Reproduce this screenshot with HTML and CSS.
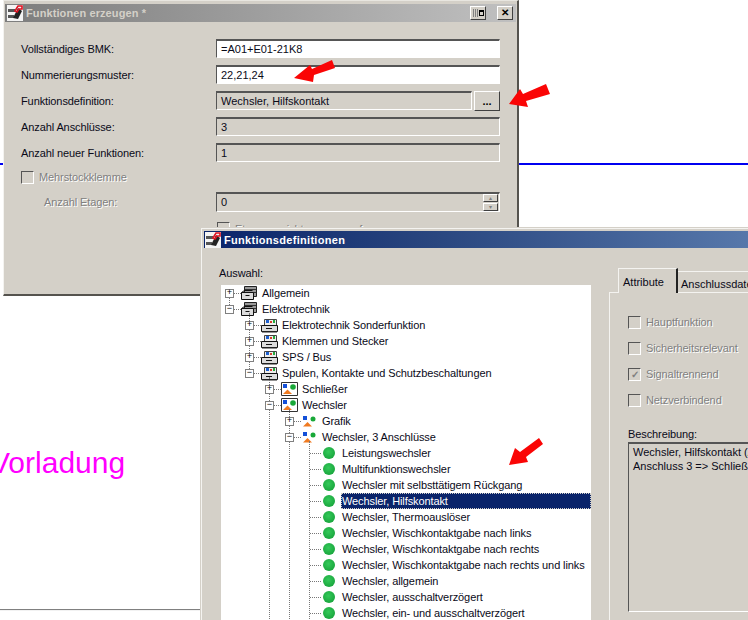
FILE: index.html
```html
<!DOCTYPE html>
<html lang="de">
<head>
<meta charset="utf-8">
<title>Funktionsdefinitionen</title>
<link rel="stylesheet" href="styles.css">
</head>
<body>
<svg class="defs" width="0" height="0" aria-hidden="true">
  <symbol id="i-app" viewBox="0 0 16 16">
    <rect width="16" height="16" fill="#f4f4f4"/>
    <path d="M1 4h7v3H1zM1 10h6v3H1z" fill="#555"/>
    <path d="M6 13 11 3l4 3-4 8z" fill="#222"/>
    <path d="M8 6 11 1h4v3h-3l-2 3z" fill="none" stroke="#e01020" stroke-width="1.6"/>
  </symbol>
  <symbol id="i-drawer" viewBox="0 0 17 16">
    <path d="M3.500 1.500h12v10h-12z" fill="#9a9a9a" stroke="#222"/>
    <path d="M4 4.500h11M4 7.500h11" stroke="#333"/>
    <path d="M.5 7.500h12v7H.5z" fill="#dcdcdc" stroke="#111"/>
    <path d="M.5 7.500l3-2h8M4.500 10.500h4" stroke="#111" fill="none"/>
  </symbol>
  <symbol id="i-printer" viewBox="0 0 17 16">
    <path d="M3.500 2.500h12v6h-12z" fill="#eee" stroke="#444"/>
    <path d="M5 3h3v3H5z" fill="#1c5fd0"/><path d="M9 4h2v2H9z" fill="#d8402a"/><path d="M12 3h2v3h-2z" fill="#25a83c"/>
    <path d="M.5 8.500h16v6H.5z" fill="#dcdcdc" stroke="#111"/>
    <path d="M5 11.500h6" stroke="#111"/>
    <path d="M1 14h15v1.500H1z" fill="#222"/>
  </symbol>
  <symbol id="i-frame" viewBox="0 0 17 16">
    <path d="M.5 1.500h16v13H.5z" fill="#fff" stroke="#333"/>
    <path d="M2 3h4v4H2z" fill="#1450d8"/>
    <circle cx="12" cy="6" r="2.800" fill="#18a838"/>
    <path d="M6.500 8.500l4.500 4.500H2z" fill="#f07a20"/>
  </symbol>
  <symbol id="i-shapes" viewBox="0 0 17 16">
    <path d="M2 3h4v4H2z" fill="#1450d8"/>
    <circle cx="12" cy="6" r="2.500" fill="#18a838"/>
    <path d="M6.500 9l4.500 4.500H2z" fill="#f07a20"/>
  </symbol>
</svg>

<div class="desk">
  <div class="rule-blue"></div>
  <div class="rule-gray"></div>
  <div class="magenta">Vorladung</div>

  <section class="win win-one">
    <header class="title title-off">
      <svg class="app" width="16" height="16"><use href="#i-app"/></svg>
      <span class="title-text">Funktionen erzeugen *</span>
      <button class="cap cap-restore" type="button"><span class="restore-bars"></span><span class="restore-mark"></span></button>
      <button class="cap" type="button">✕</button>
    </header>
    <div class="form">
      <label class="lbl">Vollständiges BMK:</label>
      <div class="field white">=A01+E01-21K8</div>
      <label class="lbl">Nummerierungsmuster:</label>
      <div class="field white">22,21,24</div>
      <label class="lbl">Funktionsdefinition:</label>
      <div class="field-with-btn"><div class="field grow">Wechsler, Hilfskontakt</div><button class="dots" type="button">...</button></div>
      <label class="lbl">Anzahl Anschlüsse:</label>
      <div class="field">3</div>
      <label class="lbl">Anzahl neuer Funktionen:</label>
      <div class="field">1</div>
      <div class="check-row span"><span class="cb"></span><span class="off">Mehrstockklemme</span></div>
      <label class="lbl off indent">Anzahl Etagen:</label>
      <div class="field spin">0
        <span class="spin-btns"><span class="spin-btn">▴</span><span class="spin-btn">▾</span></span>
      </div>
      <div class="check-row col2"><span class="cb"></span><span class="off">Etagenansicht zusammenfassen</span></div>
    </div>
  </section>

  <section class="win win-two">
    <header class="title title-on">
      <svg class="app" width="16" height="16"><use href="#i-app"/></svg>
      <span class="title-text">Funktionsdefinitionen</span>
    </header>
    <div class="body">
      <div class="left">
        <div class="auswahl">Auswahl:</div>
        <div class="tree">
          <ul class="lvl root">
            <li><div class="row"><span class="exp">+</span><span class="dash"></span><svg class="ic" width="17" height="16"><use href="#i-drawer"/></svg><span class="txt">Allgemein</span></div></li>
            <li><div class="row"><span class="exp">−</span><span class="dash"></span><svg class="ic" width="17" height="16"><use href="#i-drawer"/></svg><span class="txt">Elektrotechnik</span></div>
              <ul class="lvl sub sub-short">
                <li><div class="row"><span class="exp">+</span><span class="dash"></span><svg class="ic" width="17" height="16"><use href="#i-printer"/></svg><span class="txt">Elektrotechnik Sonderfunktion</span></div></li>
                <li><div class="row"><span class="exp">+</span><span class="dash"></span><svg class="ic" width="17" height="16"><use href="#i-printer"/></svg><span class="txt">Klemmen und Stecker</span></div></li>
                <li><div class="row"><span class="exp">+</span><span class="dash"></span><svg class="ic" width="17" height="16"><use href="#i-printer"/></svg><span class="txt">SPS / Bus</span></div></li>
                <li><div class="row"><span class="exp">−</span><span class="dash"></span><svg class="ic" width="17" height="16"><use href="#i-printer"/></svg><span class="txt">Spulen, Kontakte und Schutzbeschaltungen</span></div>
                  <ul class="lvl sub">
                    <li><div class="row"><span class="exp">+</span><span class="dash"></span><svg class="ic" width="17" height="16"><use href="#i-frame"/></svg><span class="txt">Schließer</span></div></li>
                    <li><div class="row"><span class="exp">−</span><span class="dash"></span><svg class="ic" width="17" height="16"><use href="#i-frame"/></svg><span class="txt">Wechsler</span></div>
                      <ul class="lvl sub">
                        <li><div class="row"><span class="exp">+</span><span class="dash"></span><svg class="ic" width="17" height="16"><use href="#i-shapes"/></svg><span class="txt">Grafik</span></div></li>
                        <li><div class="row"><span class="exp">−</span><span class="dash"></span><svg class="ic" width="17" height="16"><use href="#i-shapes"/></svg><span class="txt">Wechsler, 3 Anschlüsse</span></div>
                          <ul class="lvl sub">
                            <li><div class="row"><span class="noexp"></span><span class="dash"></span><span class="ball"></span><span class="txt">Leistungswechsler</span></div></li>
                            <li><div class="row"><span class="noexp"></span><span class="dash"></span><span class="ball"></span><span class="txt">Multifunktionswechsler</span></div></li>
                            <li><div class="row"><span class="noexp"></span><span class="dash"></span><span class="ball"></span><span class="txt">Wechsler mit selbsttätigem Rückgang</span></div></li>
                            <li><div class="row"><span class="noexp"></span><span class="dash"></span><span class="ball"></span><span class="txt sel">Wechsler, Hilfskontakt</span></div></li>
                            <li><div class="row"><span class="noexp"></span><span class="dash"></span><span class="ball"></span><span class="txt">Wechsler, Thermoauslöser</span></div></li>
                            <li><div class="row"><span class="noexp"></span><span class="dash"></span><span class="ball"></span><span class="txt">Wechsler, Wischkontaktgabe nach links</span></div></li>
                            <li><div class="row"><span class="noexp"></span><span class="dash"></span><span class="ball"></span><span class="txt">Wechsler, Wischkontaktgabe nach rechts</span></div></li>
                            <li><div class="row"><span class="noexp"></span><span class="dash"></span><span class="ball"></span><span class="txt">Wechsler, Wischkontaktgabe nach rechts und links</span></div></li>
                            <li><div class="row"><span class="noexp"></span><span class="dash"></span><span class="ball"></span><span class="txt">Wechsler, allgemein</span></div></li>
                            <li><div class="row"><span class="noexp"></span><span class="dash"></span><span class="ball"></span><span class="txt">Wechsler, ausschaltverzögert</span></div></li>
                            <li><div class="row"><span class="noexp"></span><span class="dash"></span><span class="ball"></span><span class="txt">Wechsler, ein- und ausschaltverzögert</span></div></li>
                          </ul>
                        </li>
                      </ul>
                    </li>
                  </ul>
                </li>
              </ul>
            </li>
          </ul>
        </div>
      </div>
      <div class="right">
        <div class="tabs">
          <div class="tab active">Attribute</div>
          <div class="tab">Anschlussdaten</div>
        </div>
        <div class="panel">
          <div class="check-col">
            <div class="check-row"><span class="cb"></span><span class="off">Hauptfunktion</span></div>
            <div class="check-row"><span class="cb"></span><span class="off">Sicherheitsrelevant</span></div>
            <div class="check-row"><span class="cb checked">✓</span><span class="off">Signaltrennend</span></div>
            <div class="check-row"><span class="cb"></span><span class="off">Netzverbindend</span></div>
          </div>
          <div class="desc-label">Beschreibung:</div>
          <div class="desc">Wechsler, Hilfskontakt (Anschluss 1 =&gt; Wurzel<br>Anschluss 3 =&gt; Schließer)</div>
        </div>
      </div>
    </div>
  </section>

  <svg class="arrows" width="748" height="620" aria-hidden="true">
    <polygon points="294,78 310,65 312,69 332,60 335,68 314,75 313,82"/>
    <polygon points="509,104 520,89 523,94 546,84 550,94 526,101 528,107"/>
    <polygon points="509,465 515,448 520,452 539,438 543,444 526,457 528,462"/>
  </svg>
</div>
</body>
</html>
```

FILE: styles.css
```css
html, body { margin: 0; padding: 0; overflow: hidden; background: #fff; }
.defs { position: absolute; }
.desk {
  position: relative;
  width: 748px;
  height: 620px;
  overflow: hidden;
  font: 11px/14px "Liberation Sans", Arial, sans-serif;
  letter-spacing: -0.1px;
  color: #0a0a18;
}
.rule-blue { position: absolute; left: 0; top: 163px; width: 748px; height: 2px; background: #0000f0; }
.rule-gray { position: absolute; left: 0; top: 609px; width: 201px; height: 1px; background: #808080; box-shadow: 0 1px 0 #f2f2f2; }
.magenta {
  position: absolute;
  left: -10px;
  top: 445px;
  font-size: 30px;
  line-height: 36px;
  letter-spacing: 0;
  color: #ff00ff;
}
.arrows { position: absolute; left: 0; top: 0; pointer-events: none; }
.arrows polygon { fill: #fa0505; }

.win { position: absolute; box-sizing: border-box; background: #d4d0c8; }
.win-one {
  left: 3px; top: 0; width: 516px; height: 296px;
  border-left: 1px solid #f4f3f0;
  border-top: 1px solid #e8e6e0;
  border-right: 2px solid #55534e;
  border-bottom: 2px solid #55534e;
  padding: 3px 1px 0 1px;
}
.win-two {
  left: 201px; top: 228px; width: 640px; height: 420px;
  border-left: 1px solid #f4f3f0;
  border-top: 1px solid #f4f3f0;
  padding: 2px 0 0 2px;
  outline: 1px solid #d4d0c8;
}

.title { display: flex; align-items: center; font-weight: bold; }
.title-off { height: 18px; background: linear-gradient(90deg, #7d7d7d, #c0c0c0); color: #d4d0c8; padding-right: 3px; letter-spacing: .1px; }
.title-on { height: 17px; background: linear-gradient(90deg, #0a246a 0%, #29467f 33%, #6d90c0 100%); color: #fff; width: 700px; letter-spacing: .3px; }
.app { flex: none; margin: 0 3px 0 1px; }
.title-off .app { margin-left: 2px; }
.title-text { flex: 1; }
.cap {
  box-sizing: border-box;
  width: 16px;
  height: 14px;
  margin: 0 0 0 11px;
  padding: 0;
  background: #d4d0c8;
  border: 1px solid;
  border-color: #fff #404040 #404040 #fff;
  font: bold 10px/12px "Liberation Sans", Arial, sans-serif;
  color: #000;
  text-align: center;
}
.cap-restore { display: flex; align-items: center; justify-content: flex-end; padding-right: 1px; gap: 1px; }
.restore-bars { display: block; width: 5px; height: 8px; background: repeating-linear-gradient(90deg, #808080 0 1px, transparent 1px 2px); }
.restore-mark { display: block; width: 3px; height: 3px; border: 1px solid #000; border-top-width: 2px; }

.form {
  display: grid;
  grid-template-columns: 195px 284px;
  grid-template-rows: repeat(5, 19px) 16px 20px 19px;
  row-gap: 7px;
  padding: 17px 0 0 16px;
  align-items: center;
}
.lbl { display: block; }
.indent { padding-left: 23px; }
.field {
  box-sizing: border-box;
  height: 19px;
  border: 1px solid;
  border-color: #555 #fff #fff #555;
  border-top-width: 2px;
  padding: 0 0 0 4px;
  line-height: 16px;
  letter-spacing: 0;
  background: #d4d0c8;
  position: relative;
}
.white { background: #fff; }
.field-with-btn { display: flex; gap: 2px; height: 20px; }
.grow { flex: 1; }
.dots {
  box-sizing: border-box;
  width: 26px;
  height: 20px;
  padding: 0;
  background: #d4d0c8;
  border: 1px solid;
  border-color: #fff #404040 #404040 #fff;
  font: bold 11px/12px "Liberation Sans", Arial, sans-serif;
  color: #000;
}
.spin { height: 20px; }
.spin-btns { position: absolute; right: 1px; top: 0; display: flex; flex-direction: column; gap: 1px; }
.spin-btn {
  box-sizing: border-box;
  display: block;
  width: 15px;
  height: 8px;
  font-size: 6px;
  line-height: 6px;
  text-align: center;
  color: #808080;
  background: #d4d0c8;
  border: 1px solid;
  border-color: #fff #404040 #404040 #fff;
}
.check-row { display: flex; align-items: center; gap: 5px; }
.span { grid-column: 1 / 3; }
.col2 { grid-column: 2; padding-left: 1px; }
.cb {
  box-sizing: border-box;
  flex: none;
  width: 13px;
  height: 13px;
  border: 1px solid;
  border-color: #555 #fff #fff #555;
  font-size: 10px;
  line-height: 11px;
  text-align: center;
  color: #808080;
}
.checked { font-weight: bold; }
.off { color: #808080; text-shadow: 1px 1px 0 #fff; }

.body { display: flex; margin-left: -1px; }
.left { flex: none; width: 406px; padding-top: 18px; box-sizing: border-box; }
.auswahl { padding-left: 16px; }
.tree {
  box-sizing: border-box;
  margin: 5px 0 0 18px;
  width: 370px;
  height: 360px;
  padding-left: 4px;
  background: #fff;
  overflow: hidden;
}
.lvl { list-style: none; margin: 0; padding: 0; position: relative; }
.root::before {
  content: "";
  position: absolute;
  left: 4px;
  top: 8px;
  height: 16px;
  border-left: 1px dotted #777;
}
.sub { padding-left: 20px; }
.sub::before {
  content: "";
  position: absolute;
  left: 24px;
  top: -4px;
  bottom: 0;
  border-left: 1px dotted #777;
}
.sub-short::before { bottom: auto; height: 60px; }
.row { display: flex; align-items: center; height: 16px; position: relative; }
.exp {
  box-sizing: border-box;
  flex: none;
  position: relative;
  z-index: 1;
  width: 9px;
  height: 9px;
  border: 1px solid #808080;
  background: #fff;
  font: 9px/6px "Liberation Mono", monospace;
  letter-spacing: 0;
  color: #000;
  text-align: center;
}
.noexp { flex: none; width: 5px; }
.dash { flex: none; width: 7px; height: 0; border-top: 1px dotted #777; }
.noexp + .dash { width: 11px; }
.ic { flex: none; }
.ball {
  flex: none;
  width: 12px;
  height: 12px;
  margin: 0 3px 0 2px;
  border-radius: 50%;
  background: radial-gradient(circle at 45% 40%, #35c95a, #1ba83f 70%, #128a30);
}
.txt { flex: 1; margin-left: 4px; white-space: nowrap; line-height: 16px; }
.ball + .txt { margin-left: 3px; padding-left: 1px; }
.sel {
  background: #0a246a;
  color: #fff;
  outline: 1px dotted #d4d0c8;
  outline-offset: -1px;
}

.right { flex: none; width: 240px; padding-top: 21px; }
.tabs { display: flex; align-items: flex-end; padding-left: 9px; height: 24px; position: relative; z-index: 1; margin-bottom: -1px; letter-spacing: 0; }
.tab {
  box-sizing: border-box;
  height: 22px;
  padding: 5px 0 0 3px;
  border-top: 1px solid #f4f3f0;
  white-space: nowrap;
}
.tab.active {
  width: 60px;
  height: 25px;
  padding: 6px 0 0 4px;
  border-left: 1px solid #f4f3f0;
  border-right: 2px solid #222;
  background: #d4d0c8;
}
.panel {
  box-sizing: border-box;
  height: 340px;
  border-top: 1px solid #f4f3f0;
  border-left: 1px solid #f4f3f0;
  padding: 22px 0 0 18px;
}
.check-col { display: flex; flex-direction: column; gap: 12px; }
.check-col .check-row { height: 14px; }
.desc-label { margin-top: 20px; }
.desc {
  box-sizing: border-box;
  margin-top: 1px;
  height: 170px;
  width: 300px;
  border: 1px solid;
  border-color: #555 #fff #fff #555;
  border-top-width: 2px;
  padding: 1px 0 0 4px;
  letter-spacing: 0;
  white-space: nowrap;
}
```
